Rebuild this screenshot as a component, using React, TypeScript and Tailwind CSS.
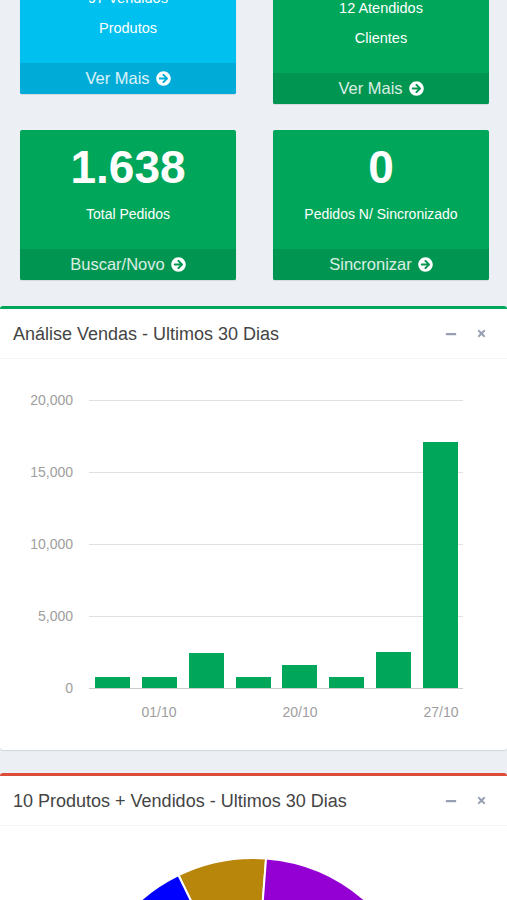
import { FaArrowCircleRight, FaMinus, FaTimes } from "react-icons/fa";

const bars = [
  { x: 95, h: 11 },
  { x: 142, h: 11 },
  { x: 189, h: 35 },
  { x: 236, h: 11 },
  { x: 282, h: 23 },
  { x: 329, h: 11 },
  { x: 376, h: 36 },
  { x: 423, h: 246 },
];

const yTicks = [
  { y: 41, label: "20,000" },
  { y: 113, label: "15,000" },
  { y: 185, label: "10,000" },
  { y: 257, label: "5,000" },
  { y: 329, label: "0" },
];

const xTicks = [
  { x: 159, label: "01/10" },
  { x: 300, label: "20/10" },
  { x: 441, label: "27/10" },
];

const CX = 253;
const CY = 202;
const R = 170;

function pt(a: number) {
  const r = (a * Math.PI) / 180;
  return [CX + R * Math.sin(r), CY - R * Math.cos(r)];
}

function arc(a0: number, a1: number) {
  const [x0, y0] = pt(a0);
  const [x1, y1] = pt(a1);
  const large = a1 - a0 > 180 ? 1 : 0;
  return `M ${CX} ${CY} L ${x0} ${y0} A ${R} ${R} 0 ${large} 1 ${x1} ${y1} Z`;
}

const slices = [
  { a0: -26, a1: 4.4, c: "#b8860b" },
  { a0: 4.4, a1: 78, c: "#9400d3" },
  { a0: 78, a1: 125, c: "#dc3912" },
  { a0: 125, a1: 170, c: "#ff9900" },
  { a0: 170, a1: 215, c: "#109618" },
  { a0: 215, a1: 250, c: "#990099" },
  { a0: 250, a1: 280, c: "#0099c6" },
  { a0: 280, a1: 305, c: "#dd4477" },
  { a0: 305, a1: 334, c: "#0000ff" },
];

function BoxHeader({ title }: { title: string }) {
  return (
    <div className="h-[50px] flex items-center justify-between pl-[13px] pr-[20px] border-b border-[#f4f4f4]">
      <span className="text-[18px] text-[#444] leading-none">{title}</span>
      <div className="flex items-center gap-[19px] text-[#97a0b3]">
        <FaMinus size={12} />
        <FaTimes size={11} />
      </div>
    </div>
  );
}

function Footer({ text, bg }: { text: string; bg: string }) {
  return (
    <div className={`h-[31px] flex items-center justify-center gap-[6px] text-[16.5px] text-white/85 ${bg}`}>
      <span>{text}</span>
      <FaArrowCircleRight size={15} className="text-white" />
    </div>
  );
}

export default function App() {
  return (
    <div className="w-[507px] h-[900px] overflow-hidden bg-[#ecf0f5] font-['Liberation_Sans',Arial,sans-serif]">
      <div className="-mt-[60px]">
        <div className="grid grid-cols-2 gap-x-[37px] pl-[20px] pr-[18px] items-start">
          <div className="bg-[#00c0ef] rounded-[2px] shadow-[0_1px_1px_rgba(0,0,0,0.1)] overflow-hidden">
            <div className="h-[123px] flex flex-col items-center pt-[43px] text-white text-[14.5px] leading-[30px]">
              <span>97 Vendidos</span>
              <span>Produtos</span>
            </div>
            <div className="h-[31px] flex items-center justify-center gap-[6px] text-[16.5px] text-white/85 bg-[#00acd7]">
              <span>Ver Mais</span>
              <FaArrowCircleRight size={15} className="text-white" />
            </div>
          </div>
          <div className="mt-[10px] bg-[#00a65a] rounded-[2px] shadow-[0_1px_1px_rgba(0,0,0,0.1)] overflow-hidden">
            <div className="h-[123px] flex flex-col items-center pt-[43px] text-white text-[14.5px] leading-[30px]">
              <span>12 Atendidos</span>
              <span>Clientes</span>
            </div>
            <Footer text="Ver Mais" bg="bg-[#009551]" />
          </div>
        </div>

        <div className="mt-[26px] grid grid-cols-2 gap-x-[37px] pl-[20px] pr-[18px]">
          <div className="bg-[#00a65a] rounded-[2px] shadow-[0_1px_1px_rgba(0,0,0,0.1)] overflow-hidden">
            <div className="h-[119px] flex flex-col items-center pt-[12px] text-white">
              <span className="text-[46px] leading-[50px] font-bold">1.638</span>
              <span className="mt-[12px] text-[14px] leading-[20px]">Total Pedidos</span>
            </div>
            <Footer text="Buscar/Novo" bg="bg-[#009551]" />
          </div>
          <div className="bg-[#00a65a] rounded-[2px] shadow-[0_1px_1px_rgba(0,0,0,0.1)] overflow-hidden">
            <div className="h-[119px] flex flex-col items-center pt-[12px] text-white">
              <span className="text-[46px] leading-[50px] font-bold">0</span>
              <span className="mt-[12px] text-[14px] leading-[20px]">Pedidos N/ Sincronizado</span>
            </div>
            <Footer text="Sincronizar" bg="bg-[#009551]" />
          </div>
        </div>

        <div className="mt-[26px] bg-white border-t-[3px] border-[#00a65a] rounded-[3px] shadow-[0_1px_1px_rgba(0,0,0,0.12)]">
          <BoxHeader title="Análise Vendas - Ultimos 30 Dias" />
          <svg width="507" height="391" className="block">
            {yTicks.map((t) => (
              <g key={t.label}>
                <line x1="89" x2="463" y1={t.y + 0.5} y2={t.y + 0.5} stroke={t.label === "0" ? "#cccccc" : "#e0e0e0"} strokeWidth="1" />
                <text x="73" y={t.y + 5} textAnchor="end" fontSize="14" fill="#9e9e9e" fontFamily="Liberation Sans, Arial, sans-serif">
                  {t.label}
                </text>
              </g>
            ))}
            {bars.map((b) => (
              <rect key={b.x} x={b.x} y={329 - b.h} width="35" height={b.h} fill="#00a65a" />
            ))}
            {xTicks.map((t) => (
              <text key={t.label} x={t.x} y="358" textAnchor="middle" fontSize="14" fill="#9e9e9e" fontFamily="Liberation Sans, Arial, sans-serif">
                {t.label}
              </text>
            ))}
          </svg>
        </div>

        <div className="mt-[23px] bg-white border-t-[3px] border-[#dd4b39] rounded-[3px] shadow-[0_1px_1px_rgba(0,0,0,0.12)]">
          <BoxHeader title="10 Produtos + Vendidos - Ultimos 30 Dias" />
          <svg width="507" height="400" className="block">
            {slices.map((s) => (
              <path key={s.c} d={arc(s.a0, s.a1)} fill={s.c} stroke="#ffffff" strokeWidth="2" />
            ))}
          </svg>
        </div>
      </div>
    </div>
  );
}
